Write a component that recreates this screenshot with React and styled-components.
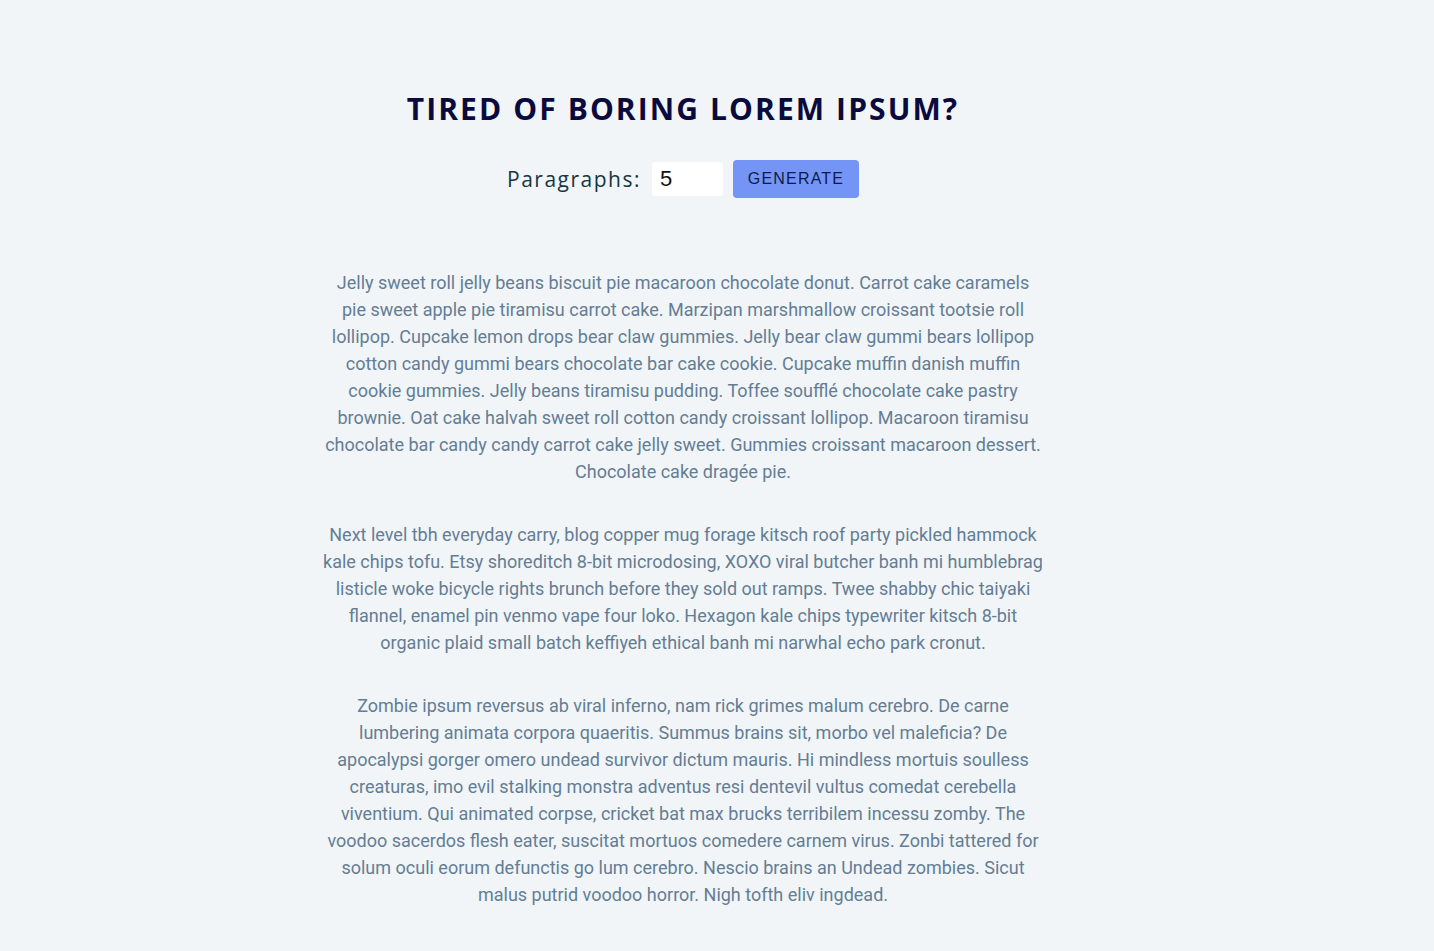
import React, { useState } from 'react';
import styled, { createGlobalStyle } from 'styled-components';

const GlobalStyle = createGlobalStyle`
  * {
    box-sizing: border-box;
  }
  body {
    margin: 0;
    background: #f1f5f8;
    font-family: Roboto, 'Liberation Sans', sans-serif;
  }
`;

const Page = styled.main`
  width: 1366px;
  min-height: 951px;
  padding-top: 92px;
`;

const Section = styled.section`
  width: 720px;
  margin: 0 auto;
  text-align: center;
`;

const Title = styled.h3`
  margin: 0;
  font-family: 'Open Sans', sans-serif;
  font-size: 30px;
  font-weight: 700;
  letter-spacing: 2.1px;
  line-height: 34px;
  text-transform: uppercase;
  color: #0b0a3c;
`;

const Form = styled.form`
  display: flex;
  justify-content: center;
  align-items: center;
  margin-top: 34px;
`;

const Label = styled.label`
  font-family: 'Open Sans', sans-serif;
  font-size: 21px;
  letter-spacing: 1.5px;
  color: #17363f;
  margin-right: 11px;
`;

const NumberInput = styled.input`
  width: 71px;
  height: 34px;
  padding: 0 8px;
  border: none;
  border-radius: 3px;
  background: #fff;
  font-family: 'Liberation Sans', sans-serif;
  font-size: 22px;
  color: #111;
  outline: none;
`;

const GenerateBtn = styled.button`
  width: 126px;
  height: 38px;
  margin-left: 10px;
  border: none;
  border-radius: 4px;
  background: #7495f6;
  font-family: 'Liberation Sans', sans-serif;
  font-size: 16px;
  letter-spacing: 1.2px;
  color: #0e1a4a;
  cursor: pointer;
`;

const LoremText = styled.article`
  margin-top: 71px;
`;

const Paragraph = styled.p`
  margin: 0 0 36px;
  font-size: 18px;
  line-height: 27px;
  color: #647d94;
`;

const texts = [
  'Jelly sweet roll jelly beans biscuit pie macaroon chocolate donut. Carrot cake caramels pie sweet apple pie tiramisu carrot cake. Marzipan marshmallow croissant tootsie roll lollipop. Cupcake lemon drops bear claw gummies. Jelly bear claw gummi bears lollipop cotton candy gummi bears chocolate bar cake cookie. Cupcake muffin danish muffin cookie gummies. Jelly beans tiramisu pudding. Toffee soufflé chocolate cake pastry brownie. Oat cake halvah sweet roll cotton candy croissant lollipop. Macaroon tiramisu chocolate bar candy candy carrot cake jelly sweet. Gummies croissant macaroon dessert. Chocolate cake dragée pie.',
  'Next level tbh everyday carry, blog copper mug forage kitsch roof party pickled hammock kale chips tofu. Etsy shoreditch 8-bit microdosing, XOXO viral butcher banh mi humblebrag listicle woke bicycle rights brunch before they sold out ramps. Twee shabby chic taiyaki flannel, enamel pin venmo vape four loko. Hexagon kale chips typewriter kitsch 8-bit organic plaid small batch keffiyeh ethical banh mi narwhal echo park cronut.',
  'Zombie ipsum reversus ab viral inferno, nam rick grimes malum cerebro. De carne lumbering animata corpora quaeritis. Summus brains sit, morbo vel maleficia? De apocalypsi gorger omero undead survivor dictum mauris. Hi mindless mortuis soulless creaturas, imo evil stalking monstra adventus resi dentevil vultus comedat cerebella viventium. Qui animated corpse, cricket bat max brucks terribilem incessu zomby. The voodoo sacerdos flesh eater, suscitat mortuos comedere carnem virus. Zonbi tattered for solum oculi eorum defunctis go lum cerebro. Nescio brains an Undead zombies. Sicut malus putrid voodoo horror. Nigh tofth eliv ingdead.',
];

export default function App() {
  const [count, setCount] = useState(5);

  const submitHandler = (e) => {
    e.preventDefault();
  };

  return (
    <>
      <GlobalStyle />
      <Page>
        <Section>
          <Title>tired of boring lorem ipsum?</Title>
          <Form onSubmit={submitHandler}>
            <Label htmlFor='amount'>Paragraphs:</Label>
            <NumberInput
              type='number'
              id='amount'
              value={count}
              onChange={(e) => setCount(e.target.value)}
            />
            <GenerateBtn type='submit'>GENERATE</GenerateBtn>
          </Form>
          <LoremText>
            {texts.map((text, i) => (
              <Paragraph key={i}>{text}</Paragraph>
            ))}
          </LoremText>
        </Section>
      </Page>
    </>
  );
}
